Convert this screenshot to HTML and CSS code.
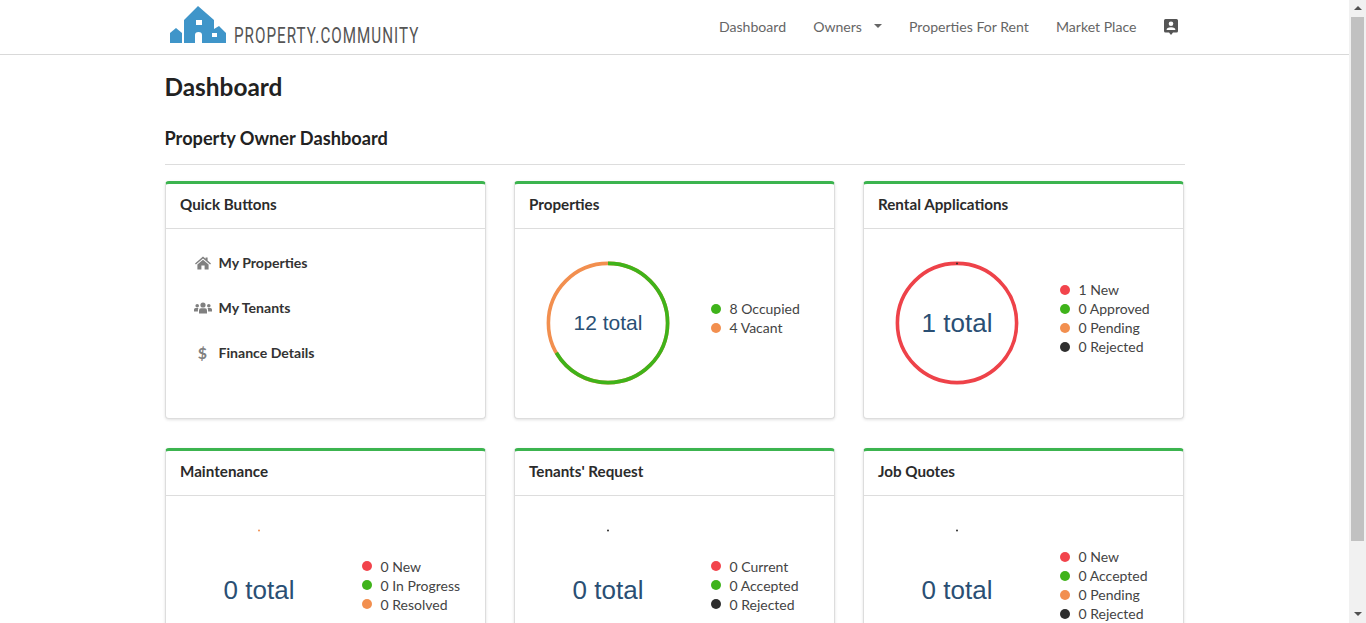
FILE: index.html
```html
<!DOCTYPE html>
<html lang="en">
<head>
    <meta charset="UTF-8">
    <title>Property Community - Dashboard</title>
    <link rel="stylesheet" href="styles.css">
</head>
<body>
<div class="window">
    <div class="page">
        <header class="navbar">
            <div class="navbar-inner">
                <a class="brand" href="#">
                    <svg class="brand-mark" width="60" height="40" viewBox="0 0 60 40">
                        <path class="brand-fill" d="M2 39 V29 L8 24 L14 29 V39 Z"/>
                        <path class="brand-fill" fill-rule="evenodd" d="M16 39 V16 L30 2 L46 16 V25 L51 22 L58 29 V39 Z M28 16 H34 V21 H28 Z M27 39 V31 Q27 28 30.5 28 Q34 28 34 31 V39 Z M44 29 H49 V33 H44 Z"/>
                    </svg>
                    <span class="brand-name">PROPERTY.COMMUNITY</span>
                </a>
                <nav class="nav">
                    <a href="#">Dashboard</a>
                    <a href="#" class="has-caret">Owners<span class="caret"></span></a>
                    <a href="#">Properties For Rent</a>
                    <a href="#">Market Place</a>
                    <a href="#" class="nav-icon">
                        <svg width="14" height="16" viewBox="0 0 14 16">
                            <path class="icon-dark" d="M1.5 0 H12.5 Q14 0 14 1.5 V12 Q14 13.5 12.5 13.5 H9 L7 16 L5 13.5 H1.5 Q0 13.5 0 12 V1.5 Q0 0 1.5 0 Z"/>
                            <circle class="icon-cut" cx="7" cy="4.8" r="2.3"/>
                            <path class="icon-cut" d="M2.6 11 Q2.6 8.2 7 8.2 Q11.4 8.2 11.4 11 Z"/>
                        </svg>
                    </a>
                </nav>
            </div>
        </header>

        <main class="content">
            <h1>Dashboard</h1>
            <h2>Property Owner Dashboard</h2>

            <div class="cards">
                <section class="card">
                    <h3 class="card-title">Quick Buttons</h3>
                    <ul class="quick">
                        <li>
                            <svg width="16" height="14" viewBox="0 0 16 14"><path class="icon-grey" d="M8 0.6 L10.6 2.8 V1.4 H12.6 V4.5 L16 7.4 L15.1 8.4 L8 2.5 L0.9 8.4 L0 7.4 Z M8 3.8 L13.6 8.4 V13.6 H9.6 V9.6 H6.4 V13.6 H2.4 V8.4 Z"/></svg>
                            My Properties
                        </li>
                        <li>
                            <svg width="18" height="12" viewBox="0 0 18 12"><g class="icon-grey"><circle cx="9" cy="3" r="2.6"/><circle cx="3.2" cy="3.8" r="1.8"/><circle cx="14.8" cy="3.8" r="1.8"/><path d="M5 11.6 V8.6 Q5 6.2 7 6.2 H11 Q13 6.2 13 8.6 V11.6 Z"/><path d="M0 9.6 V7.6 Q0 6 1.6 6 H4.4 Q3.8 6.8 3.9 9.6 Z"/><path d="M18 9.6 V7.6 Q18 6 16.4 6 H13.6 Q14.2 6.8 14.1 9.6 Z"/></g></svg>
                            My Tenants
                        </li>
                        <li>
                            <span class="dollar">$</span>
                            Finance Details
                        </li>
                    </ul>
                </section>

                <section class="card">
                    <h3 class="card-title">Properties</h3>
                    <div class="chart-body">
                        <div class="donut">
                            <svg width="124" height="124" viewBox="0 0 124 124">
                                <circle class="ring ring-orange" cx="62" cy="62" r="59.6"/>
                                <circle class="ring ring-green" cx="62" cy="62" r="59.6" pathLength="120" stroke-dasharray="80 40" transform="rotate(-90 62 62)"/>
                            </svg>
                            <span class="donut-total small">12 total</span>
                        </div>
                        <ul class="legend">
                            <li><i class="dot green"></i>8 Occupied</li>
                            <li><i class="dot orange"></i>4 Vacant</li>
                        </ul>
                    </div>
                </section>

                <section class="card">
                    <h3 class="card-title">Rental Applications</h3>
                    <div class="chart-body">
                        <div class="donut">
                            <svg width="124" height="124" viewBox="0 0 124 124">
                                <circle class="ring ring-red" cx="62" cy="62" r="59.6"/>
                                <circle class="tick dark" cx="62" cy="2.4" r="1"/>
                            </svg>
                            <span class="donut-total">1 total</span>
                        </div>
                        <ul class="legend">
                            <li><i class="dot red"></i>1 New</li>
                            <li><i class="dot green"></i>0 Approved</li>
                            <li><i class="dot orange"></i>0 Pending</li>
                            <li><i class="dot dark"></i>0 Rejected</li>
                        </ul>
                    </div>
                </section>

                <section class="card">
                    <h3 class="card-title">Maintenance</h3>
                    <div class="chart-body">
                        <div class="donut">
                            <svg width="124" height="124" viewBox="0 0 124 124"><circle class="tick orange" cx="62" cy="2.4" r="1"/></svg>
                            <span class="donut-total">0 total</span>
                        </div>
                        <ul class="legend">
                            <li><i class="dot red"></i>0 New</li>
                            <li><i class="dot green"></i>0 In Progress</li>
                            <li><i class="dot orange"></i>0 Resolved</li>
                        </ul>
                    </div>
                </section>

                <section class="card">
                    <h3 class="card-title">Tenants' Request</h3>
                    <div class="chart-body">
                        <div class="donut">
                            <svg width="124" height="124" viewBox="0 0 124 124"><circle class="tick dark" cx="62" cy="2.4" r="1"/></svg>
                            <span class="donut-total">0 total</span>
                        </div>
                        <ul class="legend">
                            <li><i class="dot red"></i>0 Current</li>
                            <li><i class="dot green"></i>0 Accepted</li>
                            <li><i class="dot dark"></i>0 Rejected</li>
                        </ul>
                    </div>
                </section>

                <section class="card">
                    <h3 class="card-title">Job Quotes</h3>
                    <div class="chart-body">
                        <div class="donut">
                            <svg width="124" height="124" viewBox="0 0 124 124"><circle class="tick dark" cx="62" cy="2.4" r="1"/></svg>
                            <span class="donut-total">0 total</span>
                        </div>
                        <ul class="legend">
                            <li><i class="dot red"></i>0 New</li>
                            <li><i class="dot green"></i>0 Accepted</li>
                            <li><i class="dot orange"></i>0 Pending</li>
                            <li><i class="dot dark"></i>0 Rejected</li>
                        </ul>
                    </div>
                </section>
            </div>
        </main>
    </div>

    <div class="scrollbar">
        <span class="arrow-up"></span>
        <div class="scroll-track"><div class="scroll-thumb"></div></div>
        <span class="arrow-down"></span>
    </div>
</div>
</body>
</html>
```

FILE: styles.css
```css
* {
    box-sizing: border-box;
}
html, body {
    margin: 0;
    height: 100%;
    overflow: hidden;
}
body {
    font-family: Lato, "Open Sans", sans-serif;
    font-size: 14px;
    background-color: #fff;
    color: #333;
}
a {
    color: inherit;
    text-decoration: none;
}
ul {
    list-style: none;
    margin: 0;
    padding: 0;
}

.window {
    display: flex;
    height: 623px;
}
.page {
    flex: 1;
    min-width: 0;
    overflow: hidden;
}

/* navbar */
.navbar {
    height: 55px;
    border-bottom: 1px solid #d9d9d9;
}
.navbar-inner {
    width: 1020px;
    margin: 0 auto;
    height: 54px;
    display: flex;
    align-items: center;
    justify-content: space-between;
    padding: 0 7px 2px 3px;
}
.brand {
    display: flex;
    align-items: flex-end;
    gap: 6px;
    height: 52px;
    padding-bottom: 7px;
}
.brand-mark {
    display: block;
    margin-bottom: 1px;
}
.brand-fill {
    fill: #3f95c9;
}
.brand-name {
    display: inline-block;
    font-family: Roboto, sans-serif;
    font-size: 22px;
    line-height: 19px;
    letter-spacing: 1.5px;
    color: #555;
    white-space: nowrap;
    transform: scaleX(0.69);
    transform-origin: left center;
}
.nav {
    display: flex;
    align-items: center;
    gap: 27px;
    font-size: 14.1px;
    color: #666;
}
.has-caret {
    display: flex;
    align-items: center;
}
.caret {
    margin-left: 12px;
    border-top: 4px solid #666;
    border-left: 4px solid transparent;
    border-right: 4px solid transparent;
}
.nav-icon {
    display: flex;
    padding-top: 2px;
}
.icon-dark {
    fill: #555;
}
.icon-cut {
    fill: #fff;
}
.icon-grey {
    fill: #808080;
}

/* page content */
.content {
    width: 1020px;
    margin: 0 auto;
}
h1 {
    margin: 0;
    padding-top: 17px;
    font-size: 24.4px;
    line-height: 30px;
    font-weight: 700;
    color: #222;
}
h2 {
    margin: 24px 0 0;
    padding-bottom: 14px;
    border-bottom: 1px solid #ddd;
    font-size: 18.2px;
    line-height: 24px;
    font-weight: 700;
    color: #222;
}

.cards {
    display: grid;
    grid-template-columns: repeat(3, 321px);
    column-gap: 28px;
    row-gap: 29px;
    margin-top: 16px;
}
.card {
    height: 238px;
    background-color: #fff;
    border: 1px solid #ddd;
    border-top: 3px solid #3cb44f;
    border-radius: 4px;
    box-shadow: 0 1px 3px rgba(0, 0, 0, 0.12);
}
.card-title {
    margin: 0;
    height: 45px;
    padding: 0 14.5px;
    border-bottom: 1px solid #ddd;
    font-size: 15.2px;
    line-height: 41px;
    font-weight: 700;
    color: #2b2b2b;
}

/* quick buttons */
.quick {
    padding: 11px 0 0 28px;
}
.quick li {
    display: flex;
    align-items: center;
    height: 45px;
    font-size: 14.1px;
    font-weight: 700;
    color: #333;
}
.quick svg, .dollar {
    width: 18px;
    margin-right: 7px;
    flex: none;
}
.dollar {
    font-size: 16px;
    text-align: center;
    color: #808080;
}

/* charts */
.chart-body {
    display: flex;
    padding: 32px 0 0 31.5px;
}
.donut {
    position: relative;
    width: 124px;
    height: 124px;
    flex: none;
}
.donut svg {
    display: block;
}
.ring {
    fill: none;
    stroke-width: 3.6;
}
.ring-orange {
    stroke: #f28f4f;
}
.ring-green {
    stroke: #3fb31a;
}
.ring-red {
    stroke: #ee4249;
}
.tick.dark {
    fill: #2e2e2e;
}
.tick.orange {
    fill: #f28f4f;
}
.donut-total {
    position: absolute;
    top: 0;
    left: 0;
    width: 100%;
    height: 100%;
    display: flex;
    align-items: center;
    justify-content: center;
    font-family: "Liberation Sans", Arial, sans-serif;
    font-size: 26px;
    color: #2a4f74;
}
.donut-total.small {
    font-size: 21px;
}
.legend {
    align-self: flex-start;
    height: 114px;
    margin-left: 41px;
    display: flex;
    flex-direction: column;
    justify-content: center;
    font-size: 14px;
    line-height: 19px;
    color: #444;
}
.legend li {
    display: flex;
    align-items: center;
}
.dot {
    width: 10px;
    height: 10px;
    border-radius: 50%;
    margin-right: 8.5px;
}
.dot.red {
    background-color: #f2444c;
}
.dot.green {
    background-color: #3fb31a;
}
.dot.orange {
    background-color: #f28f4f;
}
.dot.dark {
    background-color: #2e2e2e;
}

/* scrollbar */
.scrollbar {
    width: 17px;
    flex: none;
    display: flex;
    flex-direction: column;
    align-items: center;
    background-color: #f1f1f1;
}
.scroll-track {
    flex: 1;
    width: 100%;
    padding: 17px 2px 0;
}
.scroll-thumb {
    height: 524px;
    background-color: #c1c1c1;
}
.arrow-up, .arrow-down {
    position: absolute;
    width: 0;
    border-left: 4px solid transparent;
    border-right: 4px solid transparent;
}
.arrow-up {
    top: 6px;
    border-bottom: 4px solid #505050;
}
.arrow-down {
    top: 612px;
    border-top: 4px solid #505050;
}
```
